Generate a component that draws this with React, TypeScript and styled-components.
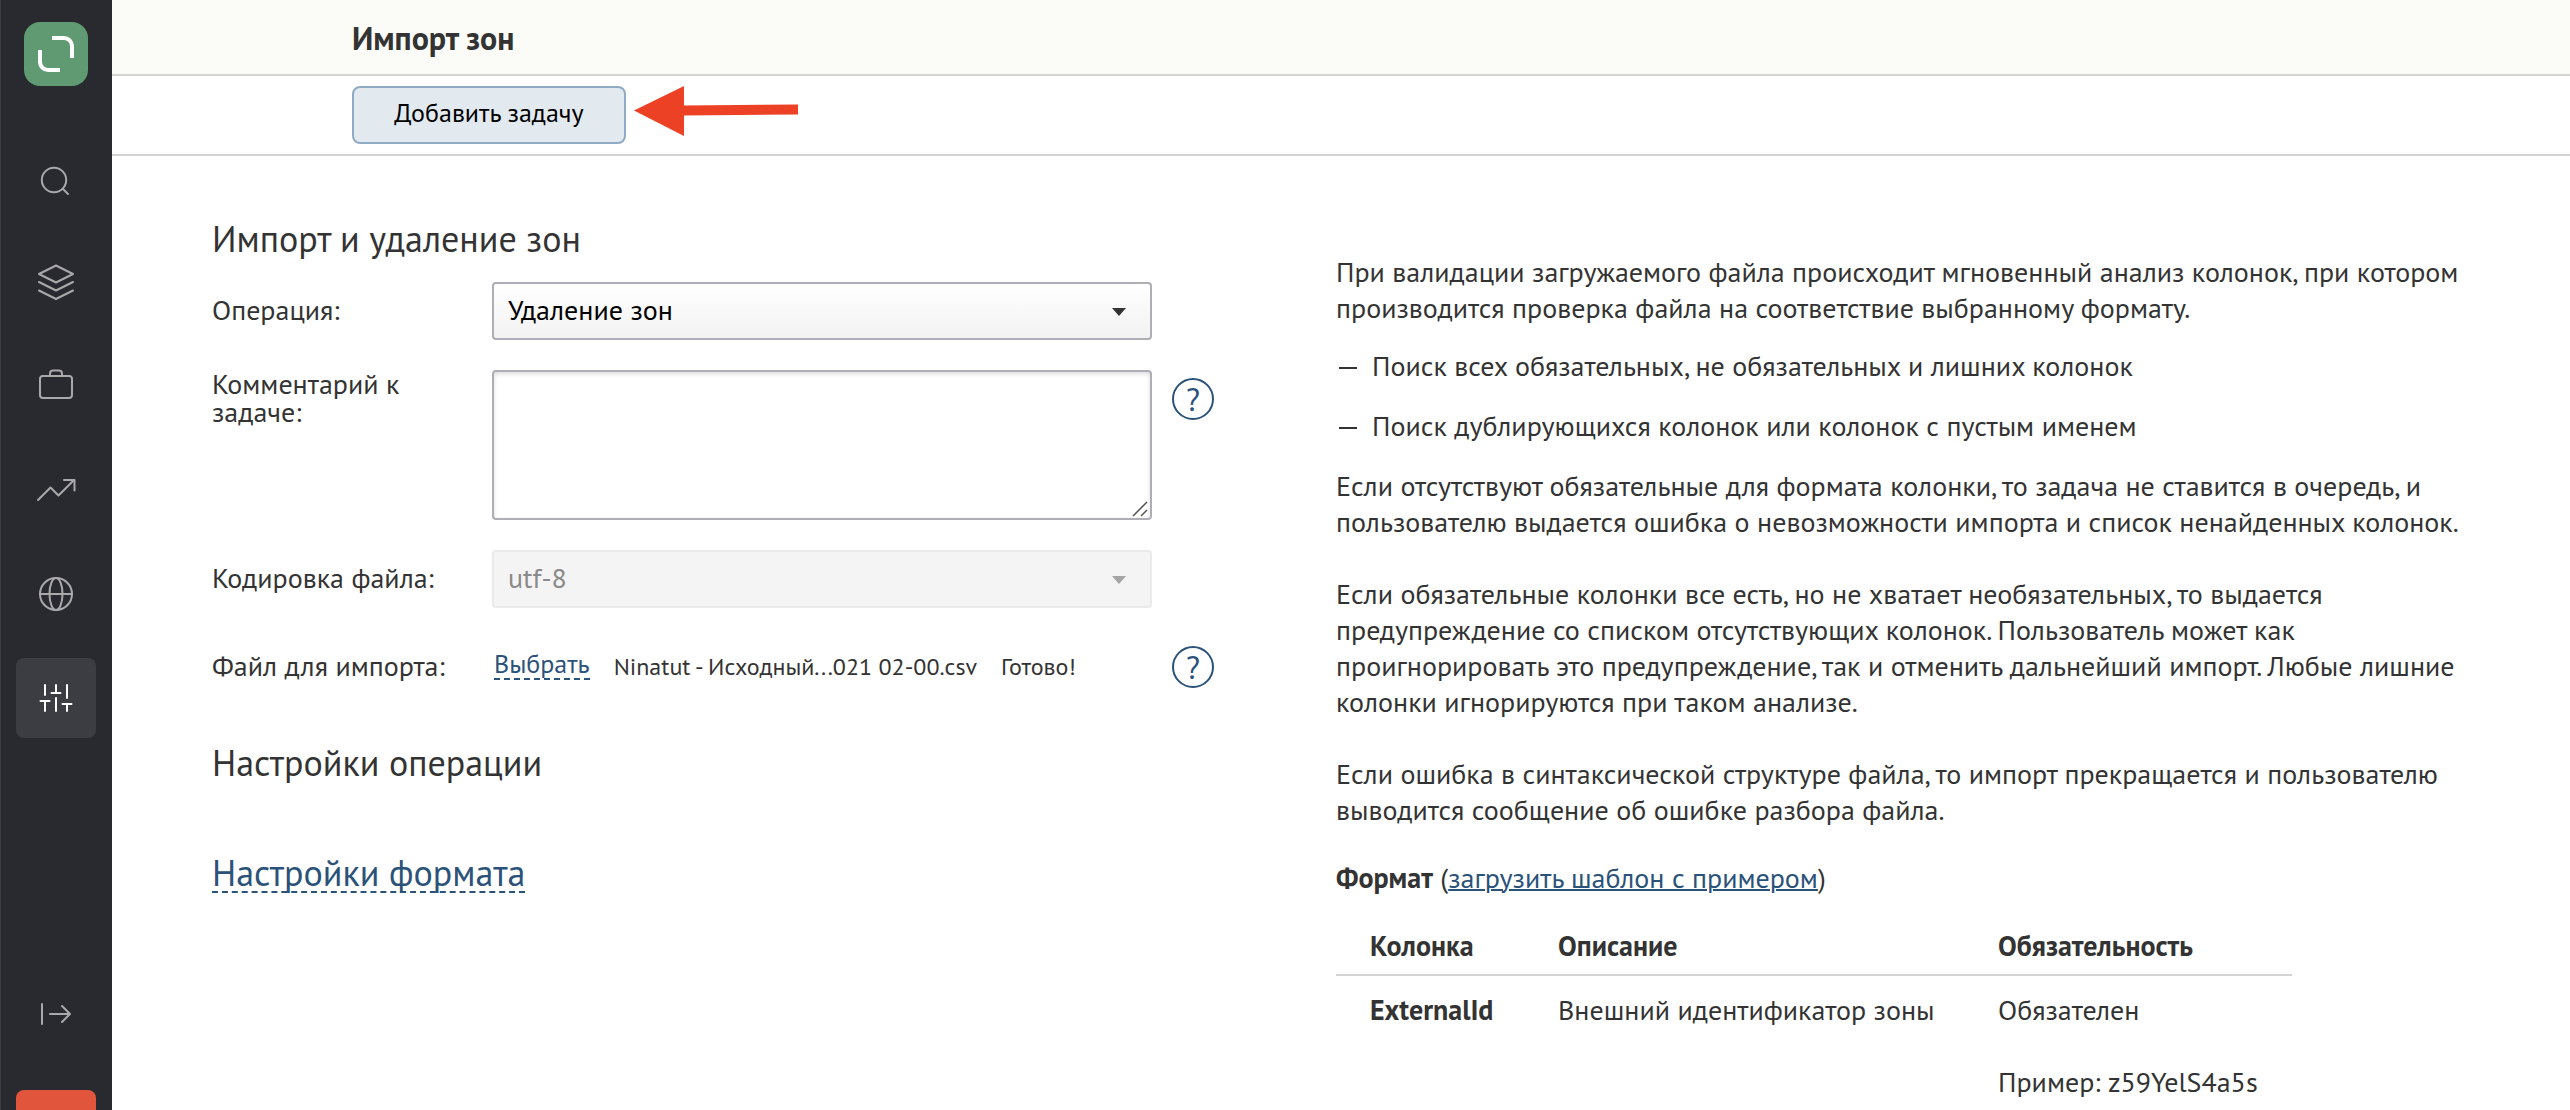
import React from "react";
import styled, { createGlobalStyle, css } from "styled-components";

const ink = "#333333";
const link = "#2b5279";
const line = "#d3d3d3";

const GlobalStyle = createGlobalStyle`
  *, *::before, *::after { box-sizing: border-box; }
  body {
    margin: 0;
    background: #ffffff;
    color: ${ink};
    font-family: "PT Sans", Lato, Roboto, sans-serif;
    font-size: 28px;
    line-height: 36px;
  }
  button, select, textarea { font: inherit; }
  h1, h2, p, ul { margin: 0; padding: 0; font-weight: 400; }
`;

const Page = styled.div`
  display: flex;
  height: 100vh;
  overflow: hidden;
`;

const Sidebar = styled.nav`
  display: flex;
  flex: none;
  flex-direction: column;
  align-items: center;
  gap: 24px;
  width: 112px;
  padding-top: 22px;
  background: #292a2f;
  box-shadow: inset 1px 0 0 #3c3d42;
  overflow: hidden;
`;

const Logo = styled.a`
  display: flex;
  flex: none;
  margin-bottom: 28px;
`;

const NavButton = styled.button<{ $active?: boolean; $tone?: "alert" }>`
  display: flex;
  flex: none;
  align-items: center;
  justify-content: center;
  width: 80px;
  height: 80px;
  padding: 0;
  border: 0;
  border-radius: 8px;
  background: ${(p) => (p.$tone === "alert" ? "#e2553d" : p.$active ? "#3b3d42" : "transparent")};
  color: ${(p) => (p.$active ? "#ffffff" : "#a9a9ab")};
`;

const SidebarFooter = styled.div`
  display: flex;
  flex: none;
  flex-direction: column;
  gap: 36px;
  margin-top: 212px;
`;

const Content = styled.main`
  flex: 1;
  min-width: 0;
`;

const Header = styled.header`
  padding: 18px 240px 16px;
  background: #fbfcf7;
  border-bottom: 2px solid ${line};
`;

const Title = styled.h1`
  && { font-weight: 700; }
  font-size: 32px;
  line-height: 40px;
`;

const Toolbar = styled.div`
  display: flex;
  align-items: flex-start;
  gap: 8px;
  padding: 10px 240px;
  border-bottom: 2px solid ${line};
`;

const AddButton = styled.button`
  min-width: 274px;
  height: 58px;
  padding: 0 40px 4px;
  border: 2px solid #8fabc3;
  border-radius: 8px;
  background: #e2e9ef;
  color: #000000;
  font-size: 26px;
`;

const Pointer = styled.svg`
  flex: none;
`;

const Columns = styled.div`
  display: grid;
  grid-template-columns: 1124px minmax(0, 1fr);
  padding: 65px 96px 0 100px;
`;

const Heading = styled.h2<{ $gap?: number }>`
  margin-top: ${(p) => p.$gap ?? 0}px;
  font-size: 36px;
  line-height: 36px;
`;

const Fields = styled.div`
  display: grid;
  gap: 30px;
  margin-top: 25px;
`;

const Field = styled.div`
  display: grid;
  grid-template-columns: 260px 660px 42px;
  column-gap: 20px;
  align-items: start;
`;

const labelText = css<{ $top?: boolean }>`
  padding-top: ${(p) => (p.$top ? 0 : 14)}px;
  line-height: 28px;
`;

const Label = styled.label<{ $top?: boolean }>`
  ${labelText}
`;

const FieldName = styled.span<{ $top?: boolean }>`
  ${labelText}
`;

const SelectBox = styled.div<{ $disabled?: boolean }>`
  position: relative;

  &::after {
    content: "";
    position: absolute;
    top: 26px;
    right: 26px;
    border: 7px solid transparent;
    border-top: 8px solid ${(p) => (p.$disabled ? "#a5a5a5" : ink)};
    border-bottom: 0;
    pointer-events: none;
  }
`;

const Select = styled.select`
  display: block;
  width: 100%;
  height: 58px;
  padding: 0 48px 2px 14px;
  appearance: none;
  border: 2px solid #aeaeb4;
  border-radius: 4px;
  background: linear-gradient(#ffffff, #f2f2f2);
  color: #000000;

  &:disabled {
    border-color: #eaeaea;
    background: #f4f4f4;
    color: #8a8a8a;
    opacity: 1;
  }
`;

const CommentBox = styled.div`
  position: relative;
`;

const Comment = styled.textarea`
  display: block;
  width: 100%;
  height: 150px;
  padding: 8px 14px;
  resize: none;
  border: 2px solid #aeaeb4;
  border-radius: 4px;
  background: #ffffff;
  box-shadow: inset 0 2px 4px rgba(0, 0, 0, 0.14);
`;

const Grip = styled.svg`
  position: absolute;
  right: 4px;
  bottom: 3px;
  pointer-events: none;
`;

const Help = styled.button`
  width: 42px;
  height: 42px;
  margin-top: 8px;
  padding: 0;
  border: 2px solid ${link};
  border-radius: 50%;
  background: transparent;
  color: ${link};
  font-size: 32px;
  line-height: 36px;
`;

const FileLine = styled.div`
  display: flex;
  align-items: flex-start;
  gap: 24px;
  padding: 12px 0 0 2px;
`;

const DashedButton = styled.button`
  padding: 0;
  border: 0;
  border-bottom: 2px dashed ${link};
  background: transparent;
  color: ${link};
`;

const ChooseButton = styled(DashedButton)`
  font-size: 26px;
  line-height: 28px;
`;

const SectionToggle = styled(DashedButton)`
  display: block;
  line-height: 36px;
`;

const FileText = styled.span`
  font-size: 24px;
  line-height: 34px;
  white-space: nowrap;
`;

const Info = styled.section`
  padding-top: 33px;
`;

const Paragraph = styled.p<{ $gap?: number }>`
  margin-top: ${(p) => p.$gap ?? 0}px;
`;

const DashList = styled.ul`
  display: grid;
  gap: 24px;
  margin: 22px 0 24px;
  list-style: none;
`;

const DashItem = styled.li`
  display: grid;
  grid-template-columns: 36px 1fr;

  &::before {
    content: "";
    width: 18px;
    height: 2px;
    margin: 19px 0 0 3px;
    background: ${ink};
  }
`;

const TextLink = styled.a`
  color: ${link};
  text-decoration: underline;
  text-decoration-thickness: 2px;
`;

const Table = styled.table`
  width: 956px;
  margin-top: 32px;
  border-collapse: collapse;
  table-layout: fixed;
  text-align: left;
`;

const HeadCell = styled.th<{ $width?: number }>`
  width: ${(p) => (p.$width ? `${p.$width}px` : "auto")};
  padding: 0 0 10px 34px;
  border-bottom: 2px solid ${line};
  font-weight: 700;
`;

const rowCell = css`
  padding: 16px 0 16px 34px;
  vertical-align: top;
`;

const RowHead = styled.th`
  ${rowCell}
`;

const Cell = styled.td`
  ${rowCell}
`;

type IconProps = { children: React.ReactNode };

const Icon = ({ children }: IconProps) => (
  <svg
    width="40"
    height="40"
    viewBox="0 0 40 40"
    fill="none"
    stroke="currentColor"
    strokeWidth="2"
    strokeLinecap="round"
    strokeLinejoin="round"
    aria-hidden="true"
  >
    {children}
  </svg>
);

const App = () => (
  <>
    <GlobalStyle />
    <Page>
      <Sidebar aria-label="Разделы">
        <Logo href="#" aria-label="На главную">
          <svg width="64" height="64" viewBox="0 0 64 64" fill="none" aria-hidden="true">
            <rect width="64" height="64" rx="16" fill="#609a72" />
            <path d="M28 16h12a8 8 0 0 1 8 8v12M36 48H24a8 8 0 0 1-8-8V28" stroke="#ffffff" strokeWidth="4" />
          </svg>
        </Logo>
        <NavButton type="button" aria-label="Поиск">
          <Icon>
            <circle cx="18" cy="22" r="12.2" />
            <path d="M27 31l5 5" />
          </Icon>
        </NavButton>
        <NavButton type="button" aria-label="Слои">
          <Icon>
            <path d="M20 3.500l17 8.500-17 8.500L3 12zM3 20l17 8.500L37 20M3 28.500L20 37l17-8.500" />
          </Icon>
        </NavButton>
        <NavButton type="button" aria-label="Портфель">
          <Icon>
            <rect x="4" y="10" width="32" height="22" rx="3" />
            <path d="M14 10V7.500a3 3 0 0 1 3-3h6a3 3 0 0 1 3 3V10" />
          </Icon>
        </NavButton>
        <NavButton type="button" aria-label="Статистика">
          <Icon>
            <path d="M2 30L14.500 17.500l8 8L38 10M28 10h10.500v10.500" />
          </Icon>
        </NavButton>
        <NavButton type="button" aria-label="Сайт">
          <Icon>
            <circle cx="20" cy="20" r="16" />
            <ellipse cx="20" cy="20" rx="6.500" ry="16" />
            <path d="M4 20h32" />
          </Icon>
        </NavButton>
        <NavButton type="button" aria-label="Настройки" $active>
          <Icon>
            <path d="M9 7v10M9 23v10M4.500 23h9M20 7v8M15.500 15h9M20 20v13M31 7v13M31 26v7M26.500 26h9" />
          </Icon>
        </NavButton>
        <SidebarFooter>
          <NavButton type="button" aria-label="Развернуть меню">
            <Icon>
              <path d="M6 10v20M14 20h20M26 12l8 8-8 8" />
            </Icon>
          </NavButton>
          <NavButton type="button" aria-label="Уведомления" $tone="alert" />
        </SidebarFooter>
      </Sidebar>

      <Content>
        <Header>
          <Title>Импорт зон</Title>
        </Header>
        <Toolbar>
          <AddButton type="button">Добавить задачу</AddButton>
          <Pointer width="164" height="50" viewBox="0 0 164 50" aria-hidden="true">
            <path d="M0 24.500L50 0V19.500L164 18.500V28.500L50 29.500V50z" fill="#ec4125" />
          </Pointer>
        </Toolbar>

        <Columns>
          <form>
            <Heading>Импорт и удаление зон</Heading>
            <Fields>
              <Field>
                <Label htmlFor="operation">Операция:</Label>
                <SelectBox>
                  <Select id="operation" defaultValue="delete">
                    <option value="delete">Удаление зон</option>
                  </Select>
                </SelectBox>
              </Field>
              <Field>
                <Label htmlFor="comment" $top>Комментарий к задаче:</Label>
                <CommentBox>
                  <Comment id="comment" />
                  <Grip width="16" height="16" viewBox="0 0 16 16" stroke="#555555" strokeWidth="1.500" aria-hidden="true">
                    <path d="M1 15L15 1M9 15L15 9" />
                  </Grip>
                </CommentBox>
                <Help type="button">?</Help>
              </Field>
              <Field>
                <Label htmlFor="encoding">Кодировка файла:</Label>
                <SelectBox $disabled>
                  <Select id="encoding" defaultValue="utf-8" disabled>
                    <option value="utf-8">utf-8</option>
                  </Select>
                </SelectBox>
              </Field>
              <Field>
                <FieldName>Файл для импорта:</FieldName>
                <FileLine>
                  <ChooseButton type="button">Выбрать</ChooseButton>
                  <FileText>Ninatut - Исходный...021 02-00.csv</FileText>
                  <FileText>Готово!</FileText>
                </FileLine>
                <Help type="button">?</Help>
              </Field>
            </Fields>
            <Heading $gap={57}>Настройки операции</Heading>
            <Heading $gap={74}>
              <SectionToggle type="button">Настройки формата</SectionToggle>
            </Heading>
          </form>

          <Info>
            <Paragraph>
              При валидации загружаемого файла происходит мгновенный анализ колонок, при котором
              производится проверка файла на соответствие выбранному формату.
            </Paragraph>
            <DashList>
              <DashItem>Поиск всех обязательных, не обязательных и лишних колонок</DashItem>
              <DashItem>Поиск дублирующихся колонок или колонок с пустым именем</DashItem>
            </DashList>
            <Paragraph>
              Если отсутствуют обязательные для формата колонки, то задача не ставится в очередь, и
              пользователю выдается ошибка о невозможности импорта и список ненайденных колонок.
            </Paragraph>
            <Paragraph $gap={36}>
              Если обязательные колонки все есть, но не хватает необязательных, то выдается
              предупреждение со списком отсутствующих колонок. Пользователь может как
              проигнорировать это предупреждение, так и отменить дальнейший импорт. Любые лишние
              колонки игнорируются при таком анализе.
            </Paragraph>
            <Paragraph $gap={36}>
              Если ошибка в синтаксической структуре файла, то импорт прекращается и пользователю
              выводится сообщение об ошибке разбора файла.
            </Paragraph>
            <Paragraph $gap={32}>
              <b>Формат</b> (<TextLink href="#">загрузить шаблон с примером</TextLink>)
            </Paragraph>
            <Table>
              <thead>
                <tr>
                  <HeadCell scope="col" $width={188}>Колонка</HeadCell>
                  <HeadCell scope="col" $width={440}>Описание</HeadCell>
                  <HeadCell scope="col">Обязательность</HeadCell>
                </tr>
              </thead>
              <tbody>
                <tr>
                  <RowHead scope="row">ExternalId</RowHead>
                  <Cell>Внешний идентификатор зоны</Cell>
                  <Cell>
                    <Paragraph>Обязателен</Paragraph>
                    <Paragraph $gap={36}>Пример: z59YelS4a5s</Paragraph>
                  </Cell>
                </tr>
              </tbody>
            </Table>
          </Info>
        </Columns>
      </Content>
    </Page>
  </>
);

export default App;
